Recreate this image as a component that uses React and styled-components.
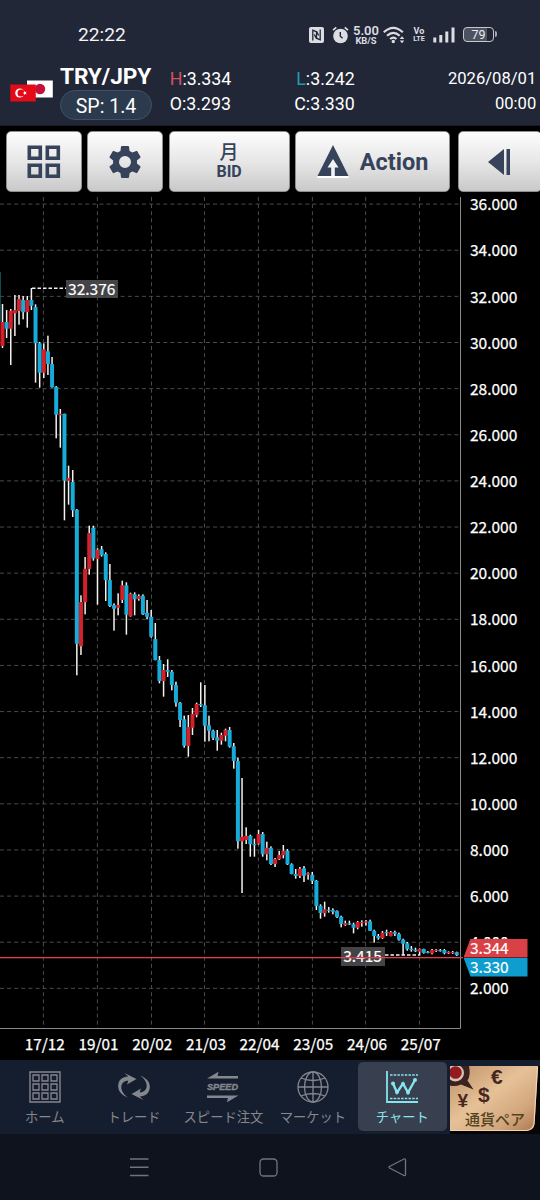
import React from 'react';
import styled, { createGlobalStyle } from 'styled-components';

const Global = createGlobalStyle`
  *{box-sizing:border-box}
  body{margin:0;background:#000;overflow:hidden}
`;
const roboto = `Roboto,"Noto Sans CJK JP",sans-serif`;
const noto = `"Noto Sans CJK JP","Noto Sans",sans-serif`;

const Screen = styled.main`
  width:540px;height:1200px;display:flex;flex-direction:column;background:#000;color:#fff;
  font-family:${roboto};overflow:hidden;
`;
const StatusBar = styled.div`
  height:64px;flex:none;background:#212737;display:flex;align-items:center;padding:5px 46px 0 78px;
`;
const Clock = styled.span`font-size:19.2px;line-height:24px;flex:1;color:#f4f4f6;padding-top:1px;`;
const StatusIcons = styled.div`display:flex;align-items:center;height:24px;color:#dcdde2;`;
const Glyph = styled.svg`display:block;flex:none;margin-left:${p => p.$gap || 0}px;`;
const Stack = styled.div`
  display:flex;flex-direction:column;align-items:center;width:${p => p.$w}px;
  margin-left:${p => p.$gap}px;font-weight:500;white-space:nowrap;
`;
const StackLine = styled.span`font-size:${p => p.$size}px;line-height:${p => p.$lh}px;font-weight:${p => p.$weight || 500};`;
const Battery = styled.div`
  position:relative;margin-left:8px;width:31px;height:15px;border:1.5px solid #c6c8ce;border-radius:4px;
  background:linear-gradient(90deg,#4d5260 79%,#212737 79%);
  font-size:12.5px;line-height:13px;text-align:center;color:#e8e8ec;
  &::after{content:'';position:absolute;right:-4px;top:3px;width:2px;height:6px;border-radius:0 2px 2px 0;background:#a4a7b0}
`;

const Quote = styled.header`
  height:62px;flex:none;background:#212737;display:flex;border-bottom:1px solid #171b26;
`;
const FlagCell = styled.div`width:60px;padding:15px 0 0 10px;`;
const PairCell = styled.div`width:92px;display:flex;flex-direction:column;`;
const PairName = styled.div`font-size:22.7px;line-height:25px;font-weight:700;letter-spacing:-.1px;white-space:nowrap;`;
const Spread = styled.div`
  margin-top:1px;height:30px;width:92px;border-radius:15px;border:1.5px solid #40506a;background:#2c3a4d;
  font-size:19.5px;line-height:31px;text-align:center;white-space:nowrap;
`;
const Values = styled.div`
  display:flex;flex-direction:column;width:${p => p.$w}px;margin-left:${p => p.$ml}px;padding-top:2px;
  font-size:${p => p.$size || 17.8}px;line-height:25px;text-align:${p => p.$align || 'left'};white-space:nowrap;
`;
const Mark = styled.span`color:${p => p.$c};padding-left:${p => p.$pl || 0}px;`;

const Toolbar = styled.nav`
  height:71px;flex:none;display:flex;gap:6px;padding:5px 0 0 6px;background:#000;overflow:hidden;
`;
const ToolButton = styled.button`
  flex:none;width:${p => p.$w}px;height:61px;border:1.5px solid #8e8e8e;border-radius:5px;padding:0;
  margin:0 0 0 ${p => p.$ml || 0}px;
  background:linear-gradient(#fdfdfd,#e7e7e7 50%,#c9c9c9);color:#36435a;
  display:flex;align-items:center;justify-content:center;gap:${p => p.$gap || 0}px;
  flex-direction:${p => (p.$column ? 'column' : 'row')};font-family:${roboto};
`;
const Period = styled.span`font-family:${noto};font-size:19px;line-height:17px;font-weight:500;`;
const Side = styled.span`font-size:16px;line-height:21px;font-weight:700;padding-top:2px;`;
const ActionText = styled.span`font-size:23.5px;line-height:28px;font-weight:700;padding-top:1px;`;

const ChartArea = styled.section`
  height:832px;flex:none;display:flex;position:relative;font-family:${noto};
`;
const Plot = styled.svg`display:block;flex:none;`;
const PriceAxis = styled.div`
  width:79px;height:834px;overflow:hidden;display:flex;flex-direction:column;padding:0 0 0 9px;margin-top:-16.8px;
`;
const PriceLabel = styled.div`
  height:46.133px;flex:none;display:flex;align-items:center;font-size:15.5px;line-height:20px;-webkit-text-stroke:.25px #fff;
`;
const Tag = styled.div`
  position:absolute;white-space:nowrap;font-size:15.5px;-webkit-text-stroke:.2px #fff;text-align:center;
  left:${p => p.$x}px;top:${p => p.$y}px;width:${p => p.$w}px;height:18.5px;line-height:17px;
  background:${p => p.$bg || 'rgba(80,80,82,.85)'};
`;
const PriceTag = styled(Tag)`
  text-align:left;padding-left:6.5px;height:19px;line-height:17.5px;clip-path:polygon(${p => p.$clip});
`;
const RedLine = styled.div`
  position:absolute;left:0;top:760px;width:463px;height:1px;background:#e0404a;box-shadow:0 1px rgba(224,64,74,.3);
`;
const DateAxis = styled.div`
  height:31px;flex:none;display:flex;padding:2px 0 0 18px;font-family:${noto};font-size:15.3px;line-height:24px;
  -webkit-text-stroke:.25px #fff;
`;
const DateLabel = styled.div`width:53.7px;flex:none;text-align:center;white-space:nowrap;`;

const Tabs = styled.nav`height:74px;flex:none;display:flex;background:#151e2e;`;
const Tab = styled.div`
  width:89.4px;flex:none;display:flex;flex-direction:column;align-items:center;
  color:${p => (p.$on ? '#86e4ee' : '#85878e')};
  background:${p => (p.$on ? '#383f4e' : 'transparent')};
  border-radius:5px;margin:2px 0 3px;padding-top:9px;height:69px;
`;
const TabText = styled.span`
  font-family:${noto};font-size:13.3px;line-height:20px;margin-top:4px;white-space:nowrap;
`;
const Banner = styled.div`
  width:90px;height:74px;flex:none;background:#060607;margin-left:3px;position:relative;overflow:hidden;
`;
const BannerText = styled.span`
  position:absolute;left:15px;top:48px;font-family:${noto};font-size:15px;line-height:22px;font-weight:500;color:#51431f;white-space:nowrap;
`;
const SystemBar = styled.footer`
  flex:1;background:#0f131d;display:flex;justify-content:center;padding:24px 4px 0 0;gap:110px;
`;

const PITCH = 4.13;
// One row per stretch of months: [y offset, entries], an entry being direction (u/d), high, low, body top, body bottom in thirds of a pixel
const series = [
  [260, 'u132,264,186,258 d150,234,186,206 u147,315,152,206 u105,228,150,160 u105,194,116,153 d108,178,120,157 u108,203,120,157 d84,150,120,137 d133,368,141,250 d246,383,250,338 u250,354,268,338 d227,345,274,312 d291,383,312,382 d378,535,380,464 u447,563,461,466'],
  [440, 'd-79,241,-79,122 u77,194,114,122 d90,231,126,211 d207,706,209,611 u466,645,486,619 u351,523,386,487 u257,404,279,387 d257,362,263,355 u325,494,329,357 d318,350,328,346 d337,483,342,421 d372,501,420,498 d490,572,496,506 u460,526,495,503 u422,489,436,480 d427,584,436,524 u458,530,461,529 d457,526,463,478 u463,482,468,477'],
  [580, 'd43,105,47,103 d60,118,98,110 d90,173,110,170 d129,241,177,240 d228,310,240,303 u252,350,270,303 d238,291,270,275 d270,331,275,315 d305,380,315,368 d366,441,368,420 d407,503,418,497 u405,530,441,498 u384,465,402,443 u368,412,372,405 d307,381,372,375 d315,485,376,437 d407,484,436,452 d449,480,452,473 d450,512,472,482 u458,494,465,482 u446,484,449,467 d441,503,450,500 d489,566,499,543'],
  [740, 'd53,326,63,304 u114,459,290,304 u262,312,287,300 d284,350,287,313 d296,350,312,315 u270,314,282,311 d276,350,282,343 u305,361,323,343 d319,375,323,372 u354,381,357,372 u333,360,345,358 u315,355,332,346 d327,375,332,373 d370,403,373,402 d387,416,402,408 u381,414,386,408 d378,426,385,407 u397,419,400,404 d396,432,404,423'],
  [860, 'd60,150,62,137 d133,176,137,159 u125,170,148,160 d141,158,149,152 d145,163,150,155 d151,174,153,171 d167,202,170,192 u182,198,190,196 d182,195,190,193 d188,220,193,203 u183,208,186,203 u181,200,186,189 u180,197,184,187 d179,213,184,212 d209,248,212,228 d222,239,228,235 u213,237,218,235 d209,228,216,220 u213,229,216,228 d212,228,216,221 d218,242,222,239 d236,285,239,251 d246,272,250,267 d258,275,266,270 d263,276,269,274 u265,287,267,275 d266,281,267,279 d273,280,275,278 u267,283,270,280 u267,276,269,273 d267,275,270,272 d267,283,270,280 u274,282,276,279 u273,282,276,278 d275,288,277,286'],
];
const candles = series.flatMap(([base, list]) =>
  list.split(' ').map(s => [s[0], ...s.slice(1).split(',').map(v => base + Number(v) / 3)])
);
const prices = Array.from({ length: 18 }, (_, i) => `${36 - i * 2}.000`);
const dates = ['17/12', '19/01', '20/02', '21/03', '22/04', '23/05', '24/06', '25/07'];
const columns = [43.4, 97.4, 151.5, 204.5, 258.4, 312.4, 365.6, 419.5];

const CandleChart = () => (
  <Plot width="461" height="832" viewBox="0 197 461 832">
    <g stroke="#4a4a4a" strokeWidth="1" strokeDasharray="4 3.1">
      {prices.map((p, i) => <line key={p} x1="0" x2="460" y1={204.1 + i * 46.133} y2={204.1 + i * 46.133} />)}
      {columns.map(x => <line key={x} x1={x} x2={x} y1="197" y2="1028" />)}
    </g>
    <path d="M0 272V322" stroke="#175c70" strokeWidth="1.6" />
    {candles.map(([dir, hi, lo, top, bottom], i) => {
      const x = 2.5 + i * PITCH;
      return (
        <g key={i}>
          <rect x={x - 0.75} y={hi} width="1.5" height={lo - hi} fill="#f4f2ef" />
          <rect x={x - 2} y={top} width="4" height={Math.max(1.2, bottom - top)} rx=".5" fill={dir === 'u' ? '#d61f29' : '#16abd8'} />
        </g>
      );
    })}
    <path d="M32 288.2H66M385 955H419" stroke="#f2f2f2" strokeWidth="1.5" strokeDasharray="3.5 2" />
    <path d="M460.5 197V1028.5H0" fill="none" stroke="#8a8a8a" />
  </Plot>
);

const Flags = () => (
  <Glyph width="44" height="24" viewBox="10 78 44 24">
    <path fill="#fff" d="M27 79.5h25.8v17H27z" /><circle cx="40" cy="88" r="5.2" fill="#c70f3c" />
    <path fill="#e30b17" d="M10.3 83.5h25.5v17H10.3z" />
    <circle cx="19.8" cy="92" r="4.6" fill="#fff" /><circle cx="21.1" cy="92" r="3.6" fill="#e30b17" />
    <path fill="#fff" d="m22.6 92 1.4-.6.2-1.4 1 1.1 1.4-.3-.8 1.2.8 1.3-1.4-.4-1 1.1-.2-1.4z" />
  </Glyph>
);

const App = () => (
  <Screen>
    <Global />
    <StatusBar>
      <Clock>22:22</Clock>
      <StatusIcons>
        <Glyph width="15" height="16" viewBox="0 0 15 16">
          <rect width="15" height="16" rx="2" fill="currentColor" />
          <path d="M3.8 13.5V3.2l3.7 1.6v6.8L5.3 7.5M11.2 2.5v10.3l-3.7-1.6V4.4l2.2 4.1" fill="none" stroke="#212737" strokeWidth="1.3" />
        </Glyph>
        <Glyph $gap={8} width="17" height="18" viewBox="0 0 17 18">
          <circle cx="8.5" cy="10" r="7.3" fill="currentColor" />
          <path d="M1 4.2 4.3 1.3M12.7 1.3 16 4.2" stroke="currentColor" strokeWidth="1.7" />
          <path d="M8.3 6v4.2l2.3 2" stroke="#212737" strokeWidth="1.4" fill="none" />
        </Glyph>
        <Stack $gap={3.5} $w={27}><StackLine $size={13} $lh={11} $weight={600}>5.00</StackLine><StackLine $size={9.4} $lh={9} $weight={700}>KB/S</StackLine></Stack>
        <Glyph $gap={3.5} width="23" height="18" viewBox="0 0 23 18">
          <g fill="none" stroke="currentColor" strokeWidth="2.2"><path d="M.8 6.2q9.5-8.7 19 0M4 9.7q6.3-5.7 12.7 0M7.1 13q3.2-2.8 6.4 0" /></g>
          <circle cx="10.3" cy="15.5" r="1.7" fill="currentColor" />
          <path d="m16.7 13 2.3-2.7 2.3 2.7zM16.7 14.5l2.3 2.7 2.3-2.7z" fill="currentColor" />
        </Glyph>
        <Stack $gap={7} $w={12}><StackLine $size={9} $lh={8} $weight={700}>Vo</StackLine><StackLine $size={7.2} $lh={8} $weight={700}>LTE</StackLine></Stack>
        <Glyph $gap={8} width="22" height="16" viewBox="0 0 22 16">
          <path d="M.3 10.5h3v5h-3zM6.3 8h3v7.5h-3zM12.3 4.5h3v11h-3zM18.5.5h3v15h-3z" fill="currentColor" />
        </Glyph>
        <Battery>79</Battery>
      </StatusIcons>
    </StatusBar>

    <Quote>
      <FlagCell><Flags /></FlagCell>
      <PairCell><PairName>TRY/JPY</PairName><Spread>SP: 1.4</Spread></PairCell>
      <Values $w={90} $ml={17.7}><span><Mark $c="#d8525e">H</Mark>:3.334</span><span>O:3.293</span></Values>
      <Values $w={90} $ml={34.6}><span><Mark $c="#249bb4" $pl={2}>L</Mark>:3.242</span><span>C:3.330</span></Values>
      <Values $w={110} $ml={42} $size={16.6} $align="right"><span>2026/08/01</span><span>00:00</span></Values>
    </Quote>

    <Toolbar>
      <ToolButton $w={75.5}>
        <Glyph width="34" height="34" viewBox="0 0 34 34">
          <path d="M2.3 2.3h11v11h-11zM20.3 2.3h11v11h-11zM2.3 20.3h11v11h-11zM20.3 20.3h11v11h-11z" fill="none" stroke="#36435a" strokeWidth="3.6" />
        </Glyph>
      </ToolButton>
      <ToolButton $w={75.5} $ml={-0.4}>
        <Glyph width="40" height="40" viewBox="0 0 24 24">
          <path fill="#36435a" d="M19.14 12.94c.04-.3.06-.61.06-.94s-.02-.64-.07-.94l2.03-1.58a.49.49 0 0 0 .12-.61l-1.92-3.32a.49.49 0 0 0-.59-.22l-2.39.96c-.5-.38-1.03-.7-1.62-.94l-.36-2.54a.48.48 0 0 0-.48-.41h-3.84c-.24 0-.43.17-.47.41l-.36 2.54c-.59.24-1.13.57-1.62.94l-2.39-.96a.49.49 0 0 0-.59.22L2.74 8.87a.47.47 0 0 0 .12.61l2.03 1.58a7.5 7.5 0 0 0 0 1.88l-2.03 1.58a.49.49 0 0 0-.12.61l1.92 3.32c.12.22.37.29.59.22l2.39-.96c.5.38 1.03.7 1.62.94l.36 2.54c.05.24.24.41.48.41h3.84c.24 0 .44-.17.47-.41l.36-2.54c.59-.24 1.13-.56 1.62-.94l2.39.96c.22.08.47 0 .59-.22l1.92-3.32a.47.47 0 0 0-.12-.61zM12 15.6a3.6 3.6 0 1 1 0-7.2 3.6 3.6 0 0 1 0 7.2" />
        </Glyph>
      </ToolButton>
      <ToolButton $w={121} $column><Period>月</Period><Side>BID</Side></ToolButton>
      <ToolButton $w={155} $gap={11} $ml={-0.5}>
        <Glyph width="32" height="34" viewBox="0 0 32 34">
          <path d="M16 2 32 33H0z" fill="#fff" /><path d="M16 0 31.5 31H.5z" fill="#36435a" />
          <path d="m16 14 5.500 8.500h-3.700v8.500h-3.600v-8.500h-3.700z" fill="#f3f3f3" />
        </Glyph>
        <ActionText>Action</ActionText>
      </ToolButton>
      <ToolButton $w={84} $ml={1.5}>
        <Glyph width="24" height="28" viewBox="0 0 24 28"><path d="M0 14 16 1v26zM18.5 1H22v26h-3.5z" fill="#36435a" /></Glyph>
      </ToolButton>
    </Toolbar>

    <ChartArea>
      <CandleChart />
      <PriceAxis>{prices.map(p => <PriceLabel key={p}>{p}</PriceLabel>)}</PriceAxis>
      <Tag $x={65.5} $y={82.5} $w={52.5}>32.376</Tag>
      <Tag $x={340.5} $y={750} $w={44}>3.415</Tag>
      <RedLine />
      <PriceTag $x={463.5} $y={741.5} $w={64} $bg="#d94146" $clip="7px 0,100% 0,100% 100%,0 100%">3.344</PriceTag>
      <PriceTag $x={463.5} $y={760.5} $w={64} $bg="#0d9dce" $clip="0 0,100% 0,100% 100%,7px 100%">3.330</PriceTag>
    </ChartArea>
    <DateAxis>{dates.map(d => <DateLabel key={d}>{d}</DateLabel>)}</DateAxis>

    <Tabs>
      <Tab>
        <Glyph width="32" height="32" viewBox="0 0 32 32" fill="none" stroke="currentColor">
          <path d="M1 1h30v30H1z" strokeWidth="1.4" />
          <path d="M4 4h6v6H4zM13 4h6v6h-6zM22 4h6v6h-6zM4 13h6v6H4zM13 13h6v6h-6zM22 13h6v6h-6zM4 22h6v6H4zM13 22h6v6h-6zM22 22h6v6h-6z" strokeWidth="1.3" />
        </Glyph>
        <TabText>ホーム</TabText>
      </Tab>
      <Tab>
        <Glyph width="32" height="32" viewBox="0 0 32 32" fill="currentColor">
          <path d="M10 26.5C3.5 24 .2 20 .2 15.2.2 9 4.5 5.6 10.3 5.6L6.5 2 18.5 8 9 13.5l1.4-3.8C6.5 9.4 3.3 12 3.3 16c0 4 2.7 8 6.7 10.5z" />
          <path d="M22 4.5c6.5 2.5 9.8 6.5 9.8 11.3 0 6.2-4.3 9.6-10.1 9.6l3.8 3.6-12-6 9.5-5.5-1.4 3.8c3.9.3 7.1-2.3 7.1-6.3 0-4-2.7-8-6.7-10.5z" />
        </Glyph>
        <TabText>トレード</TabText>
      </Tab>
      <Tab>
        <Glyph width="32" height="32" viewBox="0 0 32 32" fill="currentColor">
          <path d="M0 7.5 11.5.8 10.6 5H31v2.5zM31.5 24.5 20 31.2l.9-4.2H0v-2.5z" />
          <text x="0" y="19.1" textLength="31" lengthAdjust="spacingAndGlyphs" fontFamily="Liberation Sans" fontStyle="italic" fontWeight="700" fontSize="9.3" stroke="currentColor" strokeWidth=".4">SPEED</text>
        </Glyph>
        <TabText>スピード注文</TabText>
      </Tab>
      <Tab>
        <Glyph width="32" height="32" viewBox="0 0 32 32" fill="none" stroke="currentColor" strokeWidth="1.3">
          <circle cx="16" cy="16" r="15" /><ellipse cx="16" cy="16" rx="8.5" ry="15" /><path d="M16 1v30M1 16h30M4 7q12 5 24 0M4 25q12-5 24 0" />
        </Glyph>
        <TabText>マーケット</TabText>
      </Tab>
      <Tab $on>
        <Glyph width="34" height="32" viewBox="0 0 34 32" fill="none" stroke="currentColor">
          <path d="M2 0v31h31" strokeWidth="1.8" />
          <path d="M5 4h28M5 27.5h28" strokeWidth="1.6" strokeDasharray="2.5 1.2" />
          <path d="m8 12.5 4 9 6-9 5 9L30 9" strokeWidth="2.4" />
          <g fill="currentColor" stroke="none"><circle cx="8" cy="12.5" r="2" /><circle cx="12" cy="21" r="2" /><circle cx="18" cy="13" r="2" /><circle cx="23" cy="21.5" r="2" /><circle cx="30" cy="9" r="2" /></g>
        </Glyph>
        <TabText>チャート</TabText>
      </Tab>
      <Banner>
        <Glyph width="90" height="74" viewBox="450 1060 90 74">
          <defs><linearGradient id="gold" x2="1" y2="1"><stop stopColor="#bd9065" /><stop offset=".45" stopColor="#e6c198" /><stop offset=".75" stopColor="#d2a67c" /><stop offset="1" stopColor="#a9744d" /></linearGradient></defs>
          <path d="M450 1066H538L534.5 1124Q533.5 1130 527 1131H450z" fill="url(#gold)" />
          <path d="M450 1130.5H526Q533 1130 534 1124L537.5 1067" stroke="#f4d4ad" strokeWidth="1.2" fill="none" />
          <path d="M450 1066H469Q471 1075 467.5 1080.5L473.5 1089.5 461 1084.5Q455 1087 450 1085.5z" fill="#3b211f" />
          <circle cx="455.5" cy="1073" r="8.5" fill="#d8c1b5" /><circle cx="455.5" cy="1072.5" r="6.3" fill="#941b1d" />
          <path d="M450 1060H540V1066H450z" fill="#151e2e" />
          <g fill="#46271f" fontFamily="Liberation Sans" fontWeight="700" fontSize="21">
            <text x="491" y="1083.5">€</text><text x="478" y="1102">$</text><text x="457.5" y="1107" fontSize="19">¥</text>
          </g>
        </Glyph>
        <BannerText>通貨ペア</BannerText>
      </Banner>
    </Tabs>

    <SystemBar>
      <Glyph width="19" height="19" viewBox="0 0 19 19"><path d="M0 1h18.5M0 9.3h18.5M0 17.5h18.5" stroke="#70747c" strokeWidth="1.5" /></Glyph>
      <Glyph width="19" height="19" viewBox="0 0 19 19"><rect x="1" y="1" width="17" height="17" rx="3.5" fill="none" stroke="#70747c" strokeWidth="1.3" /></Glyph>
      <Glyph width="19" height="19" viewBox="0 0 19 19"><path d="M1.5 8.5 16 1q1.5-.5 1.5 1v14.5q0 1.5-1.5 1L1.5 10q-1-.7 0-1.5z" fill="none" stroke="#70747c" strokeWidth="1.3" /></Glyph>
    </SystemBar>
  </Screen>
);

export default App;
